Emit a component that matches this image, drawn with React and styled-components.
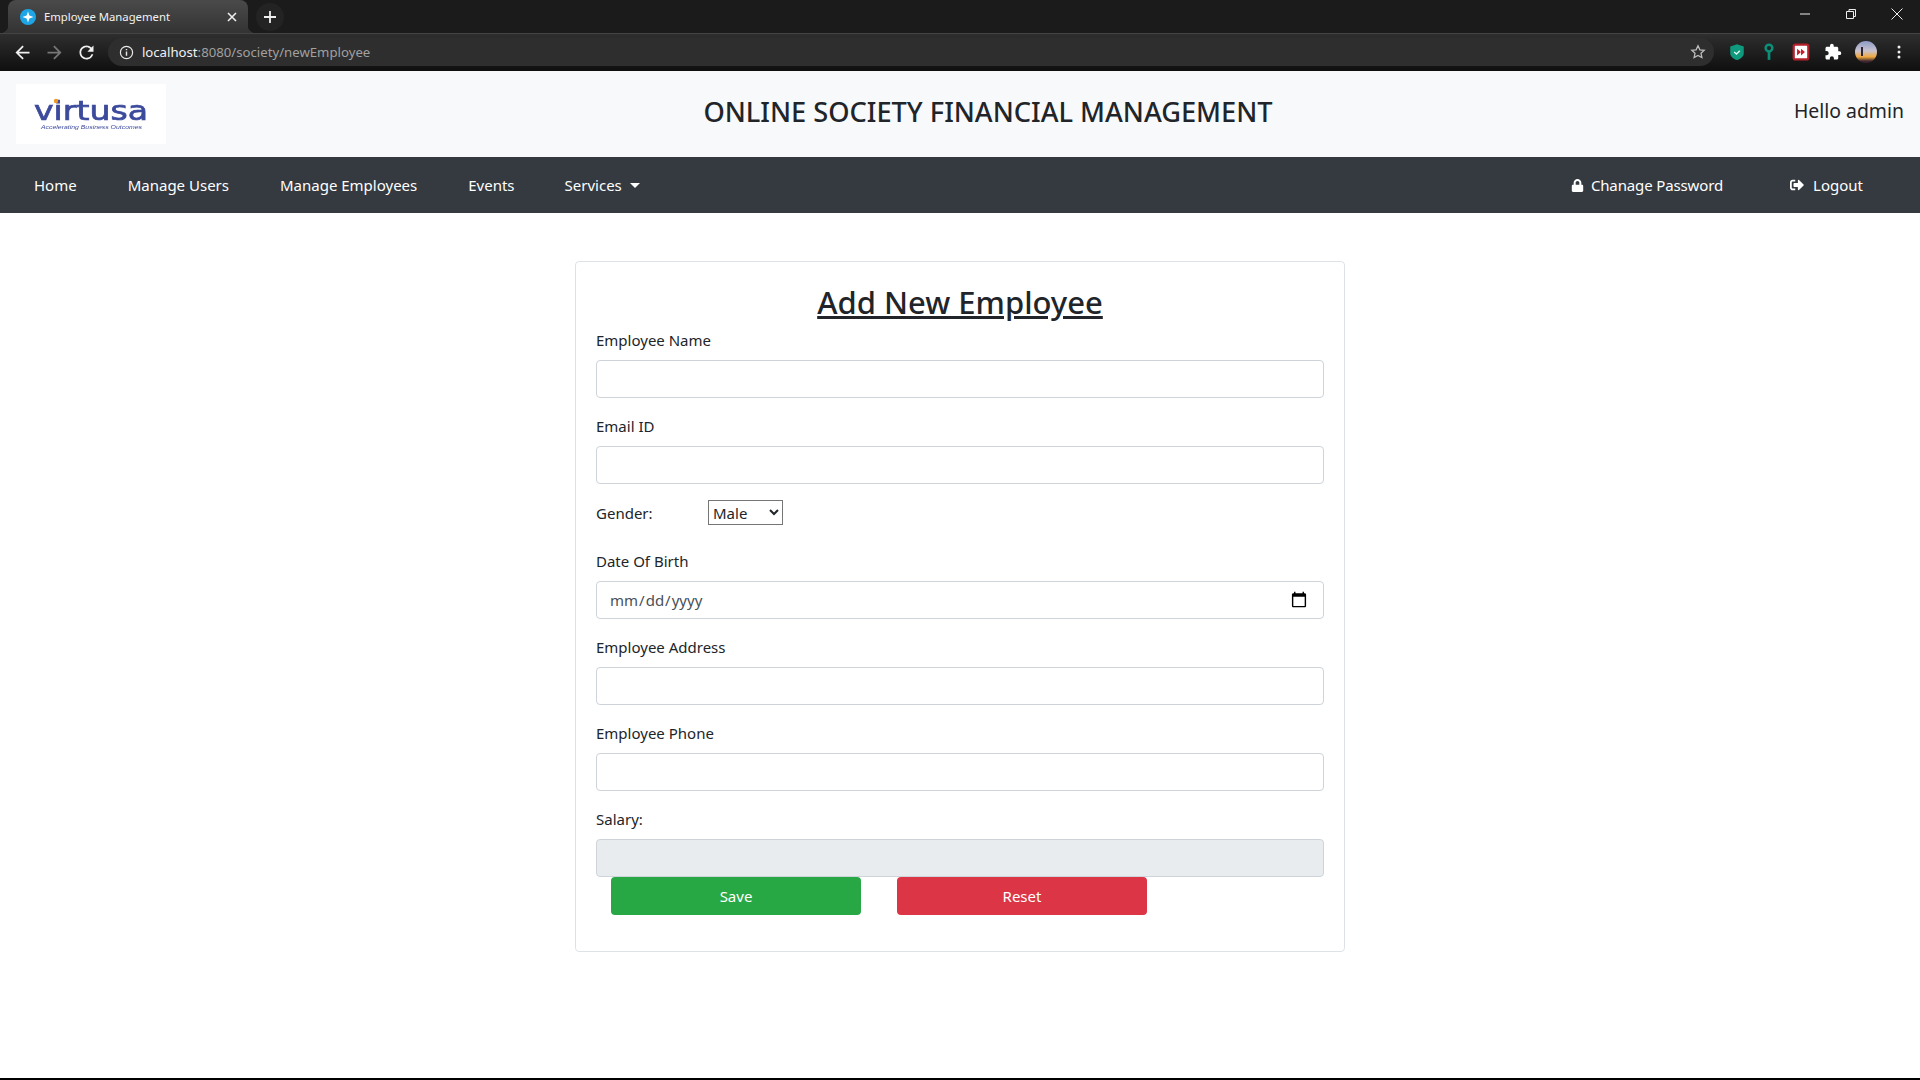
import styled, { createGlobalStyle } from "styled-components";
import { FaLock, FaSignOutAlt } from "react-icons/fa";

const GlobalStyle = createGlobalStyle`
    * {
        box-sizing: border-box;
    }
    body {
        margin: 0;
        background: #fff;
        color: #212529;
        font-family: "Noto Sans", "Open Sans", sans-serif;
        font-size: 15px;
        line-height: 24px;
    }
`;

const Page = styled.div`
    display: flex;
    flex-direction: column;
    min-height: 100vh;
`;

/* browser chrome */
const TabStrip = styled.div`
    display: flex;
    align-items: flex-end;
    height: 33px;
    padding-left: 8px;
    background: #1b1b1b;
`;

const Tab = styled.div`
    position: relative;
    display: flex;
    align-items: center;
    width: 240px;
    height: 33px;
    padding: 0 8px 0 12px;
    border-radius: 8px 8px 0 0;
    background: linear-gradient(#4a4a4a, #333);
    color: #f1f1f1;
    font-size: 11.3px;

    &::before,
    &::after {
        content: "";
        position: absolute;
        bottom: 0;
        width: 8px;
        height: 8px;
    }
    &::before {
        left: -8px;
        background: radial-gradient(circle at 0 0, transparent 8px, #333 8.5px);
    }
    &::after {
        right: -8px;
        background: radial-gradient(circle at 100% 0, transparent 8px, #333 8.5px);
    }
`;

const TabTitle = styled.span`
    flex: 1;
    margin-left: 8px;
`;

const NewTab = styled.div`
    display: flex;
    align-items: center;
    justify-content: center;
    width: 28px;
    height: 28px;
    margin: 0 0 2px 8px;
    border-radius: 50%;
    background: #232323;
`;

const WindowControls = styled.div`
    display: flex;
    align-items: center;
    gap: 30px;
    align-self: flex-start;
    height: 28px;
    margin-left: auto;
    padding-right: 15px;
`;

const Toolbar = styled.div`
    display: flex;
    align-items: center;
    height: 38px;
    padding: 0 13px 1px 12px;
    border-top: 1px solid #444;
    background: linear-gradient(#2e2e2e, #0f0f0f);
`;

const NavIcons = styled.div`
    display: flex;
    align-items: center;
    gap: 11px;
    width: 96px;
`;

const Omnibox = styled.div`
    display: flex;
    align-items: center;
    width: 1608px;
    height: 28px;
    padding: 0 8px 0 11px;
    border-radius: 14px;
    background: #2e2e2e;
`;

const Url = styled.span`
    flex: 1;
    margin-left: 8px;
    color: #a0a0a0;
    font-size: 13.2px;
    b {
        color: #f2f2f2;
        font-weight: 400;
    }
`;

const Extensions = styled.div`
    display: flex;
    align-items: center;
    gap: 14px;
    padding-left: 14px;
`;

const Avatar = styled.div`
    width: 22px;
    height: 22px;
    margin-left: -1px;
    border-radius: 50%;
    background:
        linear-gradient(90deg, transparent 28%, #2d2530 28%, #2d2530 36%, transparent 36%) 0 6px / 100% 9px no-repeat,
        linear-gradient(#8d9cc8 0%, #c9c3cf 45%, #f0a93e 72%, #3a2530 92%);
`;

/* site header */
const Header = styled.header`
    display: flex;
    align-items: flex-start;
    height: 86px;
    padding: 13px 16px 0;
    background: #f8f9fa;
`;

const LogoBox = styled.div`
    width: 150px;
    height: 60px;
    background: #fff;
    svg {
        display: block;
        filter: blur(0.35px);
    }
`;

const SiteTitle = styled.h3`
    flex: 1;
    margin: 7px 0 0 16px;
    font-size: 27.2px;
    font-weight: 500;
    line-height: 42px;
    text-align: center;
`;

const Greeting = styled.div`
    margin-top: 12px;
    font-size: 19.4px;
    line-height: 30px;
`;

/* nav bar */
const NavBar = styled.nav`
    display: flex;
    align-items: center;
    height: 56px;
    padding: 0 57px 0 34px;
    background: #343a40;
    color: #fff;
`;

const NavLink = styled.a`
    display: flex;
    align-items: center;
    gap: ${(p) => p.$gap || 0}px;
    margin-right: ${(p) => p.$after || 0}px;
    letter-spacing: ${(p) => p.$tight ? "-0.13px" : "normal"};
`;

const Caret = styled.span`
    width: 0;
    height: 0;
    margin-left: 8px;
    border-top: 5px solid #fff;
    border-left: 5px solid transparent;
    border-right: 5px solid transparent;
`;

const NavSpacer = styled.div`
    flex: 1;
`;

/* form */
const Main = styled.main`
    display: flex;
    justify-content: center;
    padding-top: 48px;
`;

const Card = styled.form`
    width: 770px;
    padding: 20px 20px 36px;
    border: 1px solid #dee2e6;
    border-radius: 4px;
`;

const Heading = styled.h2`
    margin: 0 0 8px;
    padding-top: 1px;
    height: 38px;
    font-size: 31px;
    font-weight: 500;
    line-height: 38px;
    text-align: center;
    text-decoration: underline;
`;

const Group = styled.div`
    margin-bottom: ${(p) => p.$flush ? 0 : 16}px;
`;

const Label = styled.label`
    display: block;
    margin-bottom: 8px;
`;

const Input = styled.input`
    display: block;
    width: 100%;
    height: 38px;
    padding: 6px 12px;
    border: 1px solid #ced4da;
    border-radius: 4px;
    background: ${(p) => p.disabled ? "#e9ecef" : "#fff"};
    color: #495057;
    font: inherit;

    &::-webkit-calendar-picker-indicator {
        width: 18px;
        height: 18px;
        padding: 0;
        margin: 0 3px 0 0;
    }
`;

const GenderRow = styled.div`
    display: flex;
    align-items: center;
    height: 25px;
    margin-bottom: 24px;
`;

const GenderLabel = styled.label`
    width: 112px;
`;

const GenderSelect = styled.select`
    width: 75px;
    height: 25px;
    font-family: inherit;
    font-size: 15px;
    color: #212529;
    background: #fff;
`;

const Buttons = styled.div`
    display: flex;
    gap: 36px;
    padding-left: 15px;
`;

const Button = styled.button`
    width: 250px;
    height: 38px;
    border: 0;
    border-radius: 4px;
    background: ${(p) => p.$color};
    color: #fff;
    font: inherit;
`;

const BottomEdge = styled.div`
    height: 2px;
    margin-top: auto;
    background: #000;
`;

function Glyph({ size = 16, box = 16, children }) {
    return (
        <svg width={size} height={size} viewBox={`0 0 ${box} ${box}`} fill="none">
            {children}
        </svg>
    );
}

function VirtusaLogo() {
    return (
        <svg width="150" height="60" viewBox="0 0 150 60">
            <text x="18" y="36" fill="#3c4a9c" stroke="#3c4a9c" strokeWidth="0.7" fontFamily="DejaVu Sans" fontSize="27" textLength="114" lengthAdjust="spacingAndGlyphs">virtusa</text>
            <circle cx="40" cy="17" r="2.2" fill="#f09a23" />
            <text x="25" y="44.5" fill="#3c4a9c" fontFamily="Liberation Sans" fontStyle="italic" fontSize="5.6" textLength="101" lengthAdjust="spacingAndGlyphs">Accelerating Business Outcomes</text>
        </svg>
    );
}

const fields = [
    { label: "Employee Name" },
    { label: "Email ID" },
];

const moreFields = [
    { label: "Date Of Birth", type: "date" },
    { label: "Employee Address" },
    { label: "Employee Phone" },
];

function App() {
    return (
        <Page>
            <GlobalStyle />
            <TabStrip>
                <Tab>
                    <Glyph>
                        <circle cx="8" cy="8" r="8" fill="#1ea5e6" />
                        <path d="M8 2.5 9.4 6.6 13.5 8 9.4 9.4 8 13.5 6.6 9.4 2.5 8 6.6 6.6Z" fill="#fff" />
                    </Glyph>
                    <TabTitle>Employee Management</TabTitle>
                    <Glyph>
                        <path d="M4 4l8 8M12 4l-8 8" stroke="#eee" strokeWidth="1.6" />
                    </Glyph>
                </Tab>
                <NewTab>
                    <Glyph>
                        <path d="M8 2v12M2 8h12" stroke="#eee" strokeWidth="1.8" />
                    </Glyph>
                </NewTab>
                <WindowControls>
                    <Glyph><path d="M3 8h10" stroke="#eee" /></Glyph>
                    <Glyph><path d="M3.500 5.500h7v7h-7zM6 5.500V3.500h6.500v7h-2" stroke="#eee" /></Glyph>
                    <Glyph><path d="M2.500 2.500l11 11M13.500 2.500l-11 11" stroke="#eee" /></Glyph>
                </WindowControls>
            </TabStrip>
            <Toolbar>
                <NavIcons>
                    <Glyph size={21} box={24}>
                        <path d="M20 11H7.830l5.590-5.590L12 4l-8 8 8 8 1.410-1.410L7.830 13H20v-2z" fill="#f0f0f0" />
                    </Glyph>
                    <Glyph size={21} box={24}>
                        <path d="M4 11h12.170l-5.590-5.590L12 4l8 8-8 8-1.410-1.410L16.170 13H4v-2z" fill="#777" />
                    </Glyph>
                    <Glyph size={21} box={24}>
                        <path d="M17.650 6.350A7.958 7.958 0 0 0 12 4c-4.420 0-7.990 3.580-7.990 8S7.580 20 12 20c3.730 0 6.840-2.550 7.730-6h-2.080A5.990 5.990 0 0 1 12 18c-3.310 0-6-2.690-6-6s2.690-6 6-6c1.660 0 3.140.69 4.220 1.780L13 11h7V4l-2.350 2.350z" fill="#f0f0f0" />
                    </Glyph>
                </NavIcons>
                <Omnibox>
                    <Glyph size={15}>
                        <circle cx="8" cy="8" r="6.500" stroke="#e8e8e8" strokeWidth="1.300" />
                        <path d="M8 7v4.500M8 4.200v1.500" stroke="#e8e8e8" strokeWidth="1.500" />
                    </Glyph>
                    <Url><b>localhost</b>:8080/society/newEmployee</Url>
                    <Glyph size={16}>
                        <path d="M8 1.800l1.900 4 4.300.5-3.200 3 .9 4.300L8 11.500l-3.900 2.100.9-4.300-3.200-3 4.300-.5z" stroke="#bdbdbd" strokeWidth="1.300" />
                    </Glyph>
                </Omnibox>
                <Extensions>
                    <Glyph size={18}>
                        <path d="M8 1l6 2.200v6.300C14 12 10.500 14.300 8 15.200 5.500 14.300 2 12 2 9.500V3.200z" fill="#0f9a7e" />
                        <path d="M5.500 8l2 1.800 3-3" stroke="#e8f5f0" strokeWidth="1.200" />
                    </Glyph>
                    <Glyph size={18}>
                        <circle cx="8" cy="4.500" r="3" stroke="#0b8f78" strokeWidth="2.200" />
                        <path d="M8 7v8" stroke="#0b8f78" strokeWidth="2.400" />
                    </Glyph>
                    <Glyph size={18}>
                        <rect x="1.500" y="1.500" width="13" height="13" rx="1.500" fill="#fff" stroke="#b3212b" strokeWidth="2" />
                        <path d="M4.500 5v6L8 8zM8 5v6l3.500-3z" fill="#c4202c" />
                    </Glyph>
                    <Glyph size={18} box={24}>
                        <path d="M20.500 11H19V7c0-1.100-.9-2-2-2h-4V3.500a2.500 2.500 0 0 0-5 0V5H4c-1.100 0-2 .9-2 2v3.800h1.500c1.490 0 2.700 1.210 2.700 2.700s-1.210 2.700-2.700 2.700H2V20c0 1.100.9 2 2 2h3.800v-1.500c0-1.490 1.210-2.700 2.700-2.700s2.700 1.210 2.700 2.700V22H17c1.100 0 2-.9 2-2v-4h1.500a2.500 2.500 0 0 0 0-5z" fill="#fff" />
                    </Glyph>
                    <Avatar />
                    <Glyph size={16}>
                        <circle cx="8" cy="3" r="1.500" fill="#eee" />
                        <circle cx="8" cy="8" r="1.500" fill="#eee" />
                        <circle cx="8" cy="13" r="1.500" fill="#eee" />
                    </Glyph>
                </Extensions>
            </Toolbar>

            <Header>
                <LogoBox>
                    <VirtusaLogo />
                </LogoBox>
                <SiteTitle>ONLINE SOCIETY FINANCIAL MANAGEMENT</SiteTitle>
                <Greeting>Hello admin</Greeting>
            </Header>
            <NavBar>
                <NavLink $after={51}>Home</NavLink>
                <NavLink $after={51}>Manage Users</NavLink>
                <NavLink $after={51}>Manage Employees</NavLink>
                <NavLink $after={50}>Events</NavLink>
                <NavLink>Services<Caret /></NavLink>
                <NavSpacer />
                <NavLink $gap={7} $after={67} $tight><FaLock size={13} />Chanage Password</NavLink>
                <NavLink $gap={9}><FaSignOutAlt size={14} />Logout</NavLink>
            </NavBar>

            <Main>
                <Card>
                    <Heading>Add New Employee</Heading>
                    {fields.map((f) => (
                        <Group key={f.label}>
                            <Label>{f.label}</Label>
                            <Input type="text" />
                        </Group>
                    ))}
                    <GenderRow>
                        <GenderLabel>Gender:</GenderLabel>
                        <GenderSelect defaultValue="Male">
                            <option>Male</option>
                            <option>Female</option>
                        </GenderSelect>
                    </GenderRow>
                    {moreFields.map((f) => (
                        <Group key={f.label}>
                            <Label>{f.label}</Label>
                            <Input type={f.type || "text"} />
                        </Group>
                    ))}
                    <Group $flush>
                        <Label>Salary:</Label>
                        <Input type="text" disabled />
                    </Group>
                    <Buttons>
                        <Button type="button" $color="#28a745">Save</Button>
                        <Button type="button" $color="#dc3545">Reset</Button>
                    </Buttons>
                </Card>
            </Main>
            <BottomEdge />
        </Page>
    );
}

export default App;
